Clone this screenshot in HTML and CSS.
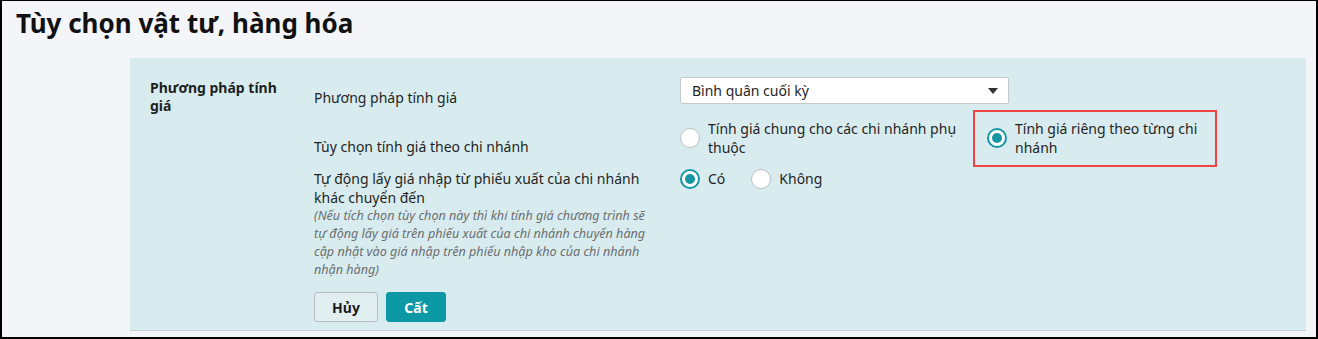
FILE: index.html
```html
<!DOCTYPE html>
<html lang="vi">
<head>
<meta charset="utf-8">
<link rel="stylesheet" href="styles.css">
</head>
<body>
<div class="page">
  <h1 class="title">Tùy chọn vật tư, hàng hóa</h1>
  <section class="panel">
    <div class="section-title">Phương pháp tính giá</div>
    <div class="rows">
      <div class="row row-method">
        <div class="label label-method">Phương pháp tính giá</div>
        <div class="control">
          <div class="select">
            <span>Bình quân cuối kỳ</span>
            <span class="caret"></span>
          </div>
        </div>
      </div>
      <div class="row row-branch">
        <div class="label label-branch">Tùy chọn tính giá theo chi nhánh</div>
        <div class="control branch-options">
          <label class="radio-option opt-common">
            <span class="radio"></span>
            <span class="radio-text">Tính giá chung cho các chi nhánh phụ thuộc</span>
          </label>
          <label class="radio-option opt-separate highlight">
            <span class="radio checked"></span>
            <span class="radio-text">Tính giá riêng theo từng chi nhánh</span>
          </label>
        </div>
      </div>
      <div class="row row-auto">
        <div class="label label-auto">
          <div class="auto-text">Tự động lấy giá nhập từ phiếu xuất của chi nhánh khác chuyển đến</div>
          <div class="note">(Nếu tích chọn tùy chọn này thì khi tính giá chương trình sẽ tự động lấy giá trên phiếu xuất của chi nhánh chuyển hàng cập nhật vào giá nhập trên phiếu nhập kho của chi nhánh nhận hàng)</div>
        </div>
        <div class="control yesno">
          <label class="radio-option inline">
            <span class="radio checked"></span>
            <span class="radio-text">Có</span>
          </label>
          <label class="radio-option inline">
            <span class="radio"></span>
            <span class="radio-text">Không</span>
          </label>
        </div>
      </div>
      <div class="actions">
        <button class="btn btn-cancel">Hủy</button>
        <button class="btn btn-save">Cất</button>
      </div>
    </div>
  </section>
</div>
</body>
</html>
```

FILE: styles.css
```css
* { box-sizing: border-box; }
html, body { margin: 0; padding: 0; }
body {
  font-family: "Noto Sans", "Open Sans", sans-serif;
  color: #1f1f1f;
  font-size: 14px;
}
.page {
  width: 1318px;
  height: 339px;
  border: 2px solid #000;
  border-top-width: 1px;
  background: #f3f5f9;
  overflow: hidden;
}
.title {
  margin: 0;
  padding: 5px 0 0 14px;
  height: 57px;
  font-size: 26px;
  font-weight: 700;
  line-height: 34px;
  color: #111;
}
.panel {
  display: flex;
  margin: 0 10px 0 128px;
  height: 273px;
  padding: 19px 0 0 20px;
  background: #d8ecef;
  border-bottom: 1px solid #c8d1d7;
}
.section-title {
  width: 164px;
  flex: none;
  font-weight: 700;
  line-height: 18px;
  padding-top: 2px;
  padding-right: 26px;
}
.rows {
  display: flex;
  flex-direction: column;
  flex: 1;
}
.row {
  display: grid;
  grid-template-columns: 366px 1fr;
}
.label { line-height: 19px; }
.label-method { padding-top: 11px; }
.row-branch { margin-top: 3px; }
.label-branch { padding-top: 27px; }
.row-auto { margin-top: 2px; }
.auto-text { width: 340px; line-height: 19px; }
.note {
  font-style: italic;
  font-size: 12.6px;
  line-height: 18px;
  color: #6b6e70;
  width: 345px;
}
.select {
  width: 329px;
  height: 27px;
  background: #fff;
  border: 1px solid #c3cbd1;
  border-radius: 2px;
  display: flex;
  align-items: center;
  justify-content: space-between;
  padding: 0 10px 0 11px;
}
.caret {
  width: 0;
  height: 0;
  border-left: 5px solid transparent;
  border-right: 5px solid transparent;
  border-top: 6px solid #333;
}
.branch-options {
  display: flex;
  align-items: flex-start;
}
.radio-option {
  display: flex;
  align-items: center;
  gap: 8px;
  line-height: 19px;
}
.radio {
  flex: none;
  width: 20px;
  height: 20px;
  border-radius: 50%;
  background: #fff;
  border: 1px solid #b9bfc3;
  position: relative;
}
.radio.checked {
  border: 2px solid #1597a3;
}
.radio.checked::after {
  content: "";
  position: absolute;
  left: 3px;
  top: 3px;
  width: 10px;
  height: 10px;
  border-radius: 50%;
  background: #1597a3;
}
.opt-common {
  width: 285px;
  margin-top: 9px;
}
.opt-separate {
  margin-left: 8px;
  width: 244px;
  height: 57px;
  padding: 0 12px 2px 12px;
  border: 2px solid #ee4444;
  align-items: center;
}
.opt-separate .radio-text { width: 190px; }
.highlight { align-self: flex-start; }
.yesno {
  display: flex;
  gap: 26px;
  align-items: flex-start;
  padding-top: 0;
}
.yesno .radio-option { height: 19px; }
.actions {
  display: flex;
  gap: 8px;
  margin-top: 13px;
}
.btn {
  font-family: "Noto Sans", "Open Sans", sans-serif;
  font-size: 14px;
  font-weight: 700;
  height: 30px;
  border-radius: 3px;
  padding: 0;
}
.btn-cancel {
  width: 64px;
  background: #e1eff1;
  border: 1px solid #b4bcc1;
  color: #1a1a1a;
}
.btn-save {
  width: 60px;
  background: #0c98a5;
  border: 1px solid #0c98a5;
  color: #fff;
}
```
